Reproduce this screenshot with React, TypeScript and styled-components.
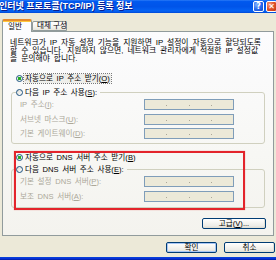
import React from 'react';
import styled, { createGlobalStyle } from 'styled-components';

const GlobalStyle = createGlobalStyle`
    html, body {
        margin: 0;
        padding: 0;
        background: #ECE9D8;
        overflow: hidden;
    }
    * { box-sizing: border-box; }
`

const FONT = `"Liberation Sans", "Noto Sans CJK KR", sans-serif`;

const Window = styled.div`
    width: 276px;
    height: 260px;
    display: flex;
    flex-direction: column;
    background: #ECE9D8;
    font-family: ${FONT};
    font-size: 7.6px;
    color: #000;
    overflow: hidden;
`

const TitleBar = styled.div`
    height: 13px;
    flex: none;
    display: flex;
    align-items: flex-start;
    background: linear-gradient(180deg, #2B7BF6 0%, #0058EE 12%, #0054E9 50%, #0563F4 85%, #0048D6 100%);
`

const TitleText = styled.div`
    flex: 1;
    margin-left: -1px;
    font-size: 9px;
    font-weight: bold;
    line-height: 12px;
    color: #fff;
    white-space: nowrap;
    text-shadow: 1px 1px 0 #0A1E8C;
`

const CaptionButton = styled.div<{ $kind: 'help' | 'close' }>`
    width: 11px;
    height: 11px;
    margin-top: 1px;
    margin-left: ${p => p.$kind === 'close' ? '2px' : '0'};
    margin-right: ${p => p.$kind === 'close' ? '-1px' : '0'};
    border: 1px solid #fff;
    border-radius: 2px;
    background: ${p => p.$kind === 'close'
        ? 'radial-gradient(circle at 30% 30%, #F3A18A 0%, #E2552E 45%, #C1330E 100%)'
        : 'radial-gradient(circle at 30% 30%, #7FAEFF 0%, #2A6BEF 50%, #1449C8 100%)'};
    display: flex;
    align-items: center;
    justify-content: center;
    color: #fff;
    font-family: "DejaVu Sans", sans-serif;
    font-weight: bold;
    font-size: 8px;
    line-height: 1;
`

const TabRow = styled.div`
    height: 12px;
    margin-top: 6px;
    padding-left: 2px;
    display: flex;
    align-items: flex-end;
    flex: none;
    position: relative;
    z-index: 1;
`

const Tab = styled.div<{ $active?: boolean }>`
    height: ${p => p.$active ? '13px' : '10px'};
    margin-bottom: ${p => p.$active ? '-1px' : '0'};
    padding: ${p => p.$active ? '2px 5px 0' : '0 4px'};
    border: 1px solid #919B9C;
    border-bottom: ${p => p.$active ? 'none' : '1px solid #919B9C'};
    border-top: ${p => p.$active ? '2px solid #E68B2C' : '1px solid #919B9C'};
    border-radius: 2px 2px 0 0;
    background: ${p => p.$active
        ? 'linear-gradient(180deg, #FFC83C 0, #FFC83C 1px, #FCFCFE 1px, #FCFCFE 100%)'
        : 'linear-gradient(180deg, #FFFFFF 0%, #F3F3EF 60%, #E6E4DA 100%)'};
    width: ${p => p.$active ? '30px' : '35px'};
    font-size: 7.6px;
    line-height: 8px;
    white-space: nowrap;
`

const Panel = styled.div`
    height: 205px;
    margin: 0 2px;
    flex: none;
    border: 1px solid #919B9C;
    background: linear-gradient(180deg, #FCFCFE 0%, #F7F7F4 60%, #F4F3EE 100%);
    padding: 7px 8px 0;
    display: flex;
    flex-direction: column;
`

const Description = styled.p`
    margin: 0 0 0 -1px;
    font-size: 7.8px;
    line-height: 8px;
    word-spacing: 1.8px;
    white-space: nowrap;
`

const RadioRow = styled.div<{ $indent?: number }>`
    height: 10px;
    display: flex;
    align-items: center;
    gap: 1px;
    padding-left: ${p => p.$indent ?? 0}px;
    white-space: nowrap;
    word-spacing: 1.5px;
`

const RadioDot = styled.span<{ $checked?: boolean }>`
    width: 7px;
    height: 7px;
    flex: none;
    border-radius: 50%;
    border: 1px solid #1C5180;
    background: ${p => p.$checked
        ? 'radial-gradient(circle, #21A121 0, #2DB42D 1.5px, #E8F5E8 2px, #FFFFFF 3px)'
        : 'linear-gradient(135deg, #DCDBD3 0%, #FFFFFF 100%)'};
`

const RadioLabel = styled.span<{ $focused?: boolean }>`
    line-height: 9px;
    padding: 0 1px;
    outline: ${p => p.$focused ? '1px dotted #7A7A7A' : 'none'};
    background: ${p => p.$focused ? '#EEEEEA' : 'transparent'};
`

const Group = styled.fieldset<{ $top: number; $bottom: number; $gap: number }>`
    margin: ${p => p.$top}px 0 0;
    padding: 2px 4px ${p => p.$bottom}px;
    border: 1px solid #D0D0BF;
    border-radius: 3px;
    min-inline-size: auto;
    display: flex;
    flex-direction: column;
    gap: ${p => p.$gap}px;
`

const Legend = styled.legend`
    padding: 0 2px 0 0;
    margin: 0;
`

const FieldRow = styled.div`
    height: 11px;
    display: grid;
    grid-template-columns: 124px 90px;
    padding-left: 4px;
    align-items: center;
`

const FieldLabel = styled.span`
    color: #ACA899;
    line-height: 9px;
    white-space: nowrap;
    word-spacing: 1.5px;
`

const IpBox = styled.div`
    height: 11px;
    border: 1px solid #7F9DB9;
    background: #ECE9D8;
    display: flex;
    align-items: flex-end;
    padding-bottom: 3px;
`

const IpPart = styled.span`
    flex: 1;
`

const IpDot = styled.span`
    width: 1px;
    height: 1px;
    background: #ACA899;
`

const DnsArea = styled.div`
    position: relative;
    margin-top: 8px;
    display: flex;
    flex-direction: column;
`

const RedMark = styled.div`
    position: absolute;
    top: -1px;
    left: 3px;
    width: 231px;
    bottom: -2px;
    border: 2px solid #E3242B;
    box-shadow: 0 0 1px rgba(227, 36, 43, 0.5);
    pointer-events: none;
`

const AdvancedRow = styled.div`
    margin-top: 10px;
    display: flex;
    justify-content: flex-end;
    margin-right: -1px;
`

const Button = styled.div<{ $w: number; $default?: boolean }>`
    width: ${p => p.$w}px;
    height: 11px;
    border: 1px solid #003C74;
    border-radius: 2px;
    background: linear-gradient(180deg, #FFFFFF 0%, #F6F5F1 40%, #ECEBE6 80%, #D6D0C5 100%);
    box-shadow: ${p => p.$default ? 'inset 0 0 0 1px #A8C6F5' : 'inset -1px -1px 0 #E3E1D6'};
    display: flex;
    align-items: center;
    justify-content: center;
    font-size: 7.6px;
    line-height: 8px;
    white-space: nowrap;
`

const Footer = styled.div`
    flex: 1;
    display: flex;
    justify-content: flex-end;
    gap: 7px;
    padding: 6px 1px 0 0;
`

const BottomFrame = styled.div`
    height: 3px;
    flex: none;
    background: linear-gradient(180deg, #0848D8 0%, #0831D9 50%, #001EA0 100%);
`

const Key = styled.u`
    text-decoration-thickness: 0.6px;
    text-underline-offset: 1px;
`

const Radio = ({ checked, focused, indent, children }: any) => (
    <RadioRow $indent={indent}>
        <RadioDot $checked={checked} />
        <RadioLabel $focused={focused}>{children}</RadioLabel>
    </RadioRow>
);

const IpField = ({ label }: any) => (
    <FieldRow>
        <FieldLabel>{label}</FieldLabel>
        <IpBox>
            <IpPart /><IpDot /><IpPart /><IpDot /><IpPart /><IpDot /><IpPart />
        </IpBox>
    </FieldRow>
);

const App = () => {
    return (
        <Window>
            <GlobalStyle />
            <TitleBar>
                <TitleText>인터넷 프로토콜(TCP/IP) 등록 정보</TitleText>
                <CaptionButton $kind="help">?</CaptionButton>
                <CaptionButton $kind="close">✕</CaptionButton>
            </TitleBar>
            <TabRow>
                <Tab $active>일반</Tab>
                <Tab>대체 구성</Tab>
            </TabRow>
            <Panel>
                <Description>
                    네트워크가 IP 자동 설정 기능을 지원하면 IP 설정이 자동으로 할당되도록<br />
                    할 수 있습니다. 지원하지 않으면, 네트워크 관리자에게 적절한 IP 설정값<br />
                    을 문의해야 합니다.
                </Description>
                <div style={{ marginTop: 10 }}>
                    <Radio checked focused indent={5}>자동으로 IP 주소 받기(<Key>O</Key>)</Radio>
                </div>
                <Group $top={4} $bottom={4} $gap={3.5}>
                    <Legend>
                        <Radio>다음 IP 주소 사용(<Key>S</Key>):</Radio>
                    </Legend>
                    <IpField label={<>IP 주소(<Key>I</Key>):</>} />
                    <IpField label={<>서브넷 마스크(<Key>U</Key>):</>} />
                    <IpField label={<>기본 게이트웨이(<Key>D</Key>):</>} />
                </Group>
                <DnsArea>
                    <Radio checked indent={5}>자동으로 DNS 서버 주소 받기(<Key>B</Key>)</Radio>
                    <Group $top={2} $bottom={5} $gap={4}>
                        <Legend>
                            <Radio>다음 DNS 서버 주소 사용(<Key>E</Key>):</Radio>
                        </Legend>
                        <IpField label={<>기본 설정 DNS 서버(<Key>P</Key>):</>} />
                        <IpField label={<>보조 DNS 서버(<Key>A</Key>):</>} />
                    </Group>
                    <RedMark />
                </DnsArea>
                <AdvancedRow>
                    <Button $w={64}>고급(<Key>V</Key>)...</Button>
                </AdvancedRow>
            </Panel>
            <Footer>
                <Button $w={51} $default>확인</Button>
                <Button $w={51}>취소</Button>
            </Footer>
            <BottomFrame />
        </Window>
    );
};

export default App;
